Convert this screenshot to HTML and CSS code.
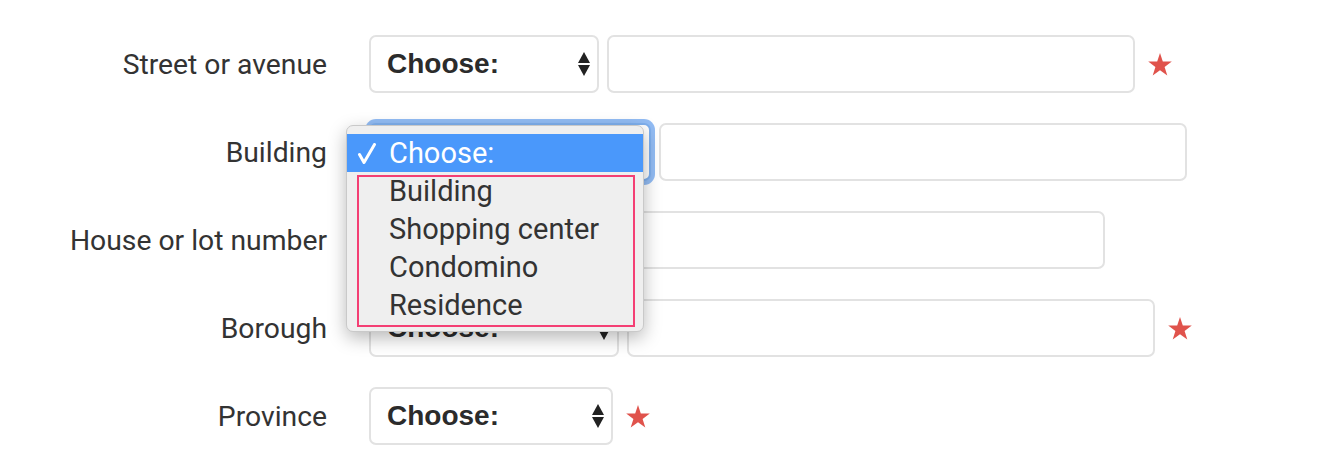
FILE: index.html
```html
<!DOCTYPE html>
<html>
<head>
<meta charset="utf-8">
<link rel="stylesheet" href="styles.css">
</head>
<body>
<form class="form">
  <div class="row">
    <label class="label">Street or avenue</label>
    <div class="select w-street"><span class="select-text">Choose:</span><span class="arrows"><i class="up"></i><i class="down"></i></span></div>
    <div class="input"></div>
    <svg class="star" width="24" height="23" viewBox="0 0 24 23"><polygon points="12,0 14.8,8.4 23.8,8.5 16.6,13.9 19.3,22.6 12,17.3 4.7,22.6 7.4,13.9 0.2,8.5 9.2,8.4" fill="#e0534c"/></svg>
  </div>
  <div class="row">
    <label class="label">Building</label>
    <div class="select w-building focused"><span class="select-text">Choose:</span><span class="arrows"><i class="up"></i><i class="down"></i></span>
      <div class="menu">
        <div class="menu-item selected"><svg class="check" width="20" height="22" viewBox="0 0 20 22"><path d="M2.5 11.5 L7 19.5 L17.5 1.5" fill="none" stroke="#ffffff" stroke-width="3" stroke-linecap="round" stroke-linejoin="round"/></svg>Choose:</div>
        <div class="menu-group">
          <div class="menu-item">Building</div>
          <div class="menu-item">Shopping center</div>
          <div class="menu-item">Condomino</div>
          <div class="menu-item">Residence</div>
        </div>
      </div>
    </div>
    <div class="input"></div>
  </div>
  <div class="row">
    <label class="label">House or lot number</label>
    <div class="select w-house"><span class="select-text">Choose:</span><span class="arrows"><i class="up"></i><i class="down"></i></span></div>
    <div class="input"></div>
  </div>
  <div class="row">
    <label class="label">Borough</label>
    <div class="select w-borough"><span class="select-text">Choose:</span><span class="arrows"><i class="up"></i><i class="down"></i></span></div>
    <div class="input"></div>
    <svg class="star" width="24" height="23" viewBox="0 0 24 23"><polygon points="12,0 14.8,8.4 23.8,8.5 16.6,13.9 19.3,22.6 12,17.3 4.7,22.6 7.4,13.9 0.2,8.5 9.2,8.4" fill="#e0534c"/></svg>
  </div>
  <div class="row">
    <label class="label">Province</label>
    <div class="select w-province"><span class="select-text">Choose:</span><span class="arrows"><i class="up"></i><i class="down"></i></span></div>
    <svg class="star" width="24" height="23" viewBox="0 0 24 23"><polygon points="12,0 14.8,8.4 23.8,8.5 16.6,13.9 19.3,22.6 12,17.3 4.7,22.6 7.4,13.9 0.2,8.5 9.2,8.4" fill="#e0534c"/></svg>
  </div>
</form>
</body>
</html>
```

FILE: styles.css
```css
html, body {
  margin: 0;
  padding: 0;
  background: #ffffff;
}
body {
  font-family: Roboto, "Liberation Sans", sans-serif;
  color: #333333;
}
.form {
  display: flex;
  flex-direction: column;
  gap: 30px;
  padding-top: 35px;
}
.row {
  display: flex;
  align-items: center;
  gap: 8px;
  height: 58px;
}
.label {
  width: 327px;
  margin-right: 34px;
  text-align: right;
  font-size: 28.3px;
  color: #333333;
}
.select {
  position: relative;
  box-sizing: border-box;
  height: 58px;
  border: 2px solid #e2e2e2;
  border-radius: 7px;
  background: #ffffff;
  display: flex;
  align-items: center;
  padding-left: 16px;
  font-family: "Liberation Sans", Arial, sans-serif;
  font-weight: bold;
  font-size: 28px;
  color: #2b2b2b;
}
.select-text {
  flex: 1;
}
.arrows {
  display: flex;
  flex-direction: column;
  gap: 2px;
  margin-right: 7px;
}
.arrows i {
  display: block;
  width: 0;
  height: 0;
  border-left: 6.5px solid transparent;
  border-right: 6.5px solid transparent;
}
.arrows .up { border-bottom: 11px solid #222; }
.arrows .down { border-top: 11px solid #222; }
.w-street { width: 230px; }
.w-building { width: 282px; }
.w-house { width: 200px; }
.w-borough { width: 250px; }
.w-province { width: 244px; }
.focused {
  box-shadow: 0 0 0 4px rgba(110, 165, 240, 0.75);
  border-color: #7fb0ee;
}
.input {
  box-sizing: border-box;
  width: 528px;
  height: 58px;
  border: 2px solid #e2e2e2;
  border-radius: 7px;
  background: #fff;
}
.star {
  display: block;
  margin-left: 5px;
}
.menu {
  position: absolute;
  left: -25px;
  top: 0;
  width: 298px;
  box-sizing: border-box;
  padding: 8px 0 4px;
  background: #efefef;
  border: 1px solid #c9c9c9;
  border-radius: 7px;
  box-shadow: 0 6px 18px rgba(0, 0, 0, 0.28);
  font-family: Roboto, "Liberation Sans", sans-serif;
  font-weight: normal;
  font-size: 29px;
  color: #333;
  z-index: 10;
}
.menu-item {
  height: 38px;
  line-height: 28px;
  padding-left: 30px;
  white-space: nowrap;
}
.menu-item:last-child {
  height: 34px;
}
.menu-item.selected {
  display: flex;
  align-items: center;
  height: 38px;
  line-height: 38px;
  background: #4a98fb;
  color: #ffffff;
  padding-left: 10px;
}
.check {
  display: block;
  flex: none;
  margin-right: 12px;
  margin-top: 1px;
}
.menu-group {
  margin: 3px 8px 0 10px;
  border: 2px solid #f43f74;
}
```
